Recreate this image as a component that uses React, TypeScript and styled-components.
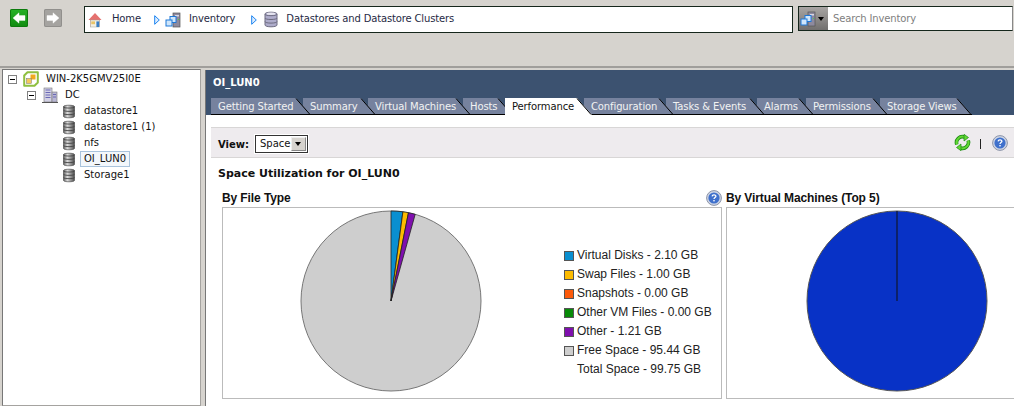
import React from 'react';
import styled, { createGlobalStyle } from 'styled-components';

const UI = `Tahoma, "DejaVu Sans", sans-serif`;

const Global = createGlobalStyle`
  html, body { margin: 0; padding: 0; width: 1014px; height: 406px; overflow: hidden; background: #d6d3ce; }
  * { box-sizing: border-box; }
`;

const Page = styled.div`
  width: 1014px; height: 406px; display: flex; flex-direction: column; overflow: hidden;
  font-family: ${UI}; font-size: 10px; color: #111;
`;
const TopBar = styled.div`
  height: 68px; flex: none; display: flex; align-items: flex-start; padding: 6px 1px 0 10px;
  border-bottom: 2px solid #a09e9b;
`;
const NavButton = styled.div<{ $on?: boolean }>`
  width: 18px; height: 18px; margin: 3px 16px 0 0; border-radius: 2px; display: flex; align-items: center; justify-content: center;
  background: ${p => (p.$on ? 'linear-gradient(#27b327,#108a10)' : '#a5a3a0')};
  box-shadow: inset 0 0 0 1px ${p => (p.$on ? '#0d7a0d' : '#918f8c')};
`;
const Breadcrumb = styled.div`
  width: 709px; height: 27px; margin-left: 6px; flex: none; background: #fff; border: 1px solid #16271c;
  display: flex; align-items: center; padding-left: 3px; color: #1f2a44; letter-spacing: -0.15px;
`;
const Crumb = styled.span<{ $left: number; $right: number }>`
  margin-left: ${p => p.$left}px; margin-right: ${p => p.$right}px; padding-bottom: 2px; white-space: nowrap;
`;
const CrumbChevron = styled.span<{ $right: number }>`
  display: flex; flex: none; margin-right: ${p => p.$right}px;
`;
const Search = styled.div`
  margin-left: 5px; flex: 1; height: 25px; display: flex; background: #fff; border: 1px solid #16271c; border-right-color: #888;
`;
const SearchPicker = styled.div`
  width: 29px; flex: none; display: flex; align-items: center; padding-left: 1px; gap: 2px;
  background: linear-gradient(#a8a5a3, #716f6e);
`;
const SearchText = styled.div`
  padding-left: 5px; line-height: 23px; color: #808080; letter-spacing: -0.15px;
`;
const Body = styled.div`
  flex: 1; display: flex; padding-top: 1px; min-height: 0;
`;
const TreePanel = styled.div`
  width: 199px; margin-left: 2px; flex: none; padding-top: 1px; background: #fff; border: 1px solid #a5a3a0; border-left-color: #777; border-top-color: #777;
`;
const TreeRow = styled.div<{ $indent: number }>`
  height: 16px; display: flex; align-items: center; padding-left: ${p => p.$indent}px; white-space: nowrap;
`;
const Expander = styled.span`
  width: 9px; height: 9px; flex: none; border: 1px solid #808080; position: relative; background: #fff; margin-right: 6px;
  &::after { content: ''; position: absolute; left: 1px; right: 1px; top: 3px; height: 1px; background: #000; }
`;
const TreeLabel = styled.span<{ $sel?: boolean }>`
  margin-left: ${p => (p.$sel ? 3 : 7)}px; padding: 0 ${p => (p.$sel ? 3 : 0)}px; height: 16px; line-height: 14px;
  border: 1px solid ${p => (p.$sel ? '#a9c3dc' : 'transparent')};
  background: ${p => (p.$sel ? '#f3f7fb' : 'transparent')};
  ${p => (p.$sel ? '' : 'border-left: 0; border-right: 0;')}
`;
const Main = styled.div`
  flex: 1; margin: 1px 0 0 4px; min-width: 0; display: flex; flex-direction: column; background: #fff; border-left: 1px solid #777;
`;
const Header = styled.div`
  height: 45px; flex: none; background: #3c5270; display: flex; flex-direction: column; justify-content: space-between;
`;
const HeaderTitle = styled.div`
  padding: 7px 0 0 7px; color: #fff; font-weight: 700; font-size: 10px;
`;
const Tabs = styled.div`
  display: flex; height: 17px; padding-left: 5px; letter-spacing: -0.12px;
`;
const Tab = styled.div<{ $w: number; $active?: boolean; $z: number }>`
  position: relative; flex: none; width: ${p => p.$w}px; margin-right: -8px; height: 17px; line-height: 16px; padding: 1px 0 0 7px;
  color: ${p => (p.$active ? '#111' : '#f2f2f2')}; white-space: nowrap; z-index: ${p => (p.$active ? 30 : p.$z)};
`;
const TabLabel = styled.span`
  position: relative;
`;
const TabShapeSvg = styled.svg`
  position: absolute; left: 0; top: 0;
`;
const Content = styled.div`
  flex: 1; min-height: 0; display: flex; flex-direction: column; padding: 12px 0 0 5px;
`;
const Toolbar = styled.div`
  height: 31px; flex: none; background: #eeebee; border-top: 1px solid #d8d6d6; border-bottom: 1px solid #d8d6d6;
  display: flex; align-items: center; padding: 0 6px 0 7px;
`;
const ViewLabel = styled.span`
  font-weight: 700; margin: 3px 6px 0 0;
`;
const Select = styled.div`
  width: 53px; height: 18px; margin-top: 2px; border: 1px solid #333; background: #fff; box-shadow: 0 0 0 1px #fff; display: flex; align-items: center; justify-content: space-between; padding-left: 4px;
`;
const SelectArrow = styled.span`
  width: 15px; height: 14px; margin-right: 1px; background: #d6d3ce; border: 1px solid #888; border-top-color: #eee; border-left-color: #eee; position: relative;
  &::after { content: ''; position: absolute; left: 3px; top: 4px; border: 3px solid transparent; border-top: 4px solid #000; border-bottom: 0; }
`;
const Spacer = styled.div`flex: 1;`;
const Pipe = styled.span`
  width: 1px; height: 10px; background: #222; margin: 3px 11px 0 9px;
`;
const Heading = styled.div`
  padding: 9px 0 0 7px; font-weight: 700; font-size: 11px; height: 31px;
`;
const Columns = styled.div`
  display: flex; flex: 1; padding-left: 11px; min-height: 0; gap: 4px;
`;
const Column = styled.div<{ $w: number }>`
  width: ${p => p.$w}px; flex: none; display: flex; flex-direction: column;
`;
const ColumnHead = styled.div`
  height: 18px; flex: none; display: flex; align-items: center; justify-content: space-between;
  font: 700 12px "Liberation Sans", Arial, sans-serif; letter-spacing: -0.1px; color: #111;
`;
const ChartBox = styled.div<{ $open?: boolean }>`
  height: 192px; flex: none; border: 1px solid #bbb; ${p => (p.$open ? 'border-right: 0;' : '')}
  display: flex; align-items: flex-start; padding-top: 2px;
`;
const Legend = styled.div`
  display: flex; flex-direction: column; margin: 36px 0 0 82px;
  font: 12px/19px "Liberation Sans", Arial, sans-serif; color: #222;
`;
const LegendRow = styled.div`
  display: flex; align-items: center; height: 19px; white-space: nowrap;
`;
const Swatch = styled.span<{ $c?: string }>`
  width: 10px; height: 10px; flex: none; margin-right: 3px;
  ${p => (p.$c ? `background: ${p.$c}; border: 1px solid #555;` : '')}
`;

const Db = () => (
  <svg width="15" height="15" viewBox="0 0 15 15" style={{ flex: 'none' }}>
    <defs>
      <linearGradient id="dbg" x1="0" x2="1" y1="0" y2="0">
        <stop offset="0" stopColor="#5d5d5d" /><stop offset=".35" stopColor="#dcdcdc" /><stop offset="1" stopColor="#4a4a4a" />
      </linearGradient>
    </defs>
    <path d="M1.5 2.5C1.5 .8 12.5 .8 12.5 2.5V12.5C12.5 14.2 1.5 14.2 1.5 12.5Z" fill="url(#dbg)" stroke="#555" strokeWidth=".7" />
    <path d="M1.5 3C1.5 4.4 12.5 4.4 12.5 3M1.5 6.3C1.5 7.7 12.5 7.7 12.5 6.3M1.5 9.6C1.5 11 12.5 11 12.5 9.6" fill="none" stroke="#444" strokeWidth=".9" />
  </svg>
);
const HelpIcon = () => (
  <svg width="16" height="16" viewBox="0 0 16 16" style={{ flex: 'none' }}>
    <circle cx="8" cy="8" r="7.4" fill="#cfd6e6" stroke="#8c94a8" />
    <circle cx="8" cy="8" r="5.6" fill="#3f70cc" />
    <path d="M6.1 6.4C6.2 4.4 9.9 4.4 9.9 6.3C9.9 7.6 8 7.6 8 9" fill="none" stroke="#fff" strokeWidth="1.3" />
    <rect x="7.3" y="10" width="1.4" height="1.4" fill="#fff" />
  </svg>
);
const ServerIcon = () => (
  <svg width="16" height="16" viewBox="0 0 16 16" style={{ flex: 'none' }}>
    <rect x="8" y="1" width="7" height="14" fill="#8e8a9e" stroke="#555" strokeWidth=".7" />
    <rect x="10" y="3" width="4" height="1.5" fill="#d8d6e2" />
    <rect x="13" y="7" width="1" height="1" fill="#4cd34c" />
    <rect x="5" y="4.5" width="6" height="6" fill="#cfe6fb" stroke="#1e78d8" />
    <rect x="1" y="8" width="6" height="6" fill="#cfe6fb" stroke="#1e78d8" />
  </svg>
);
const BigDb = () => (
  <svg width="14" height="17" viewBox="0 0 14 17" style={{ flex: 'none' }}>
    <path d="M1 3C1 .6 13 .6 13 3V14C13 16.4 1 16.4 1 14Z" fill="#aeaccb" stroke="#6d6b80" />
    <path d="M1 3.2C1 5.2 13 5.2 13 3.2M1 7C1 9 13 9 13 7M1 10.6C1 12.6 13 12.6 13 10.6" fill="none" stroke="#6d6b80" />
    <ellipse cx="7" cy="2.7" rx="4.5" ry="1.2" fill="#e6e5f0" />
  </svg>
);
const Chevron = () => (
  <svg width="6" height="10" viewBox="0 0 6 10" style={{ flex: 'none' }}>
    <path d="M.7.7L5.3 5L.7 9.3Z" fill="#dcecff" stroke="#1c84f0" />
  </svg>
);
const Home = () => (
  <svg width="14" height="16" viewBox="0 0 15 16" style={{ flex: 'none' }}>
    <path d="M7.5.5L14.5 8H12.5V15H2.5V8H.5Z" fill="#e5716f" />
    <rect x="2.5" y="8" width="10" height="7.5" fill="#f3f0e4" stroke="#9c9a90" strokeWidth=".5" />
    <rect x="3.5" y="9.5" width="4" height="3" fill="#e9c467" />
    <rect x="9" y="9.5" width="3" height="6" fill="#3a7fc4" />
  </svg>
);
const Cluster = () => (
  <svg width="16" height="16" viewBox="0 0 16 16" style={{ flex: 'none' }}>
    <path d="M4.5 1.2H14.8V11.5L11.5 14.8H1.2V4.5Z" fill="#fff" stroke="#8fbf3f" strokeWidth="2" strokeLinejoin="round" />
    <rect x="7.5" y="3.5" width="5" height="5" fill="#f0a91f" />
    <rect x="3.5" y="7.5" width="5" height="5" fill="#f4c95a" stroke="#777" strokeWidth=".5" />
  </svg>
);
const Building = () => (
  <svg width="16" height="16" viewBox="0 0 16 16" style={{ flex: 'none' }}>
    <rect x="2" y="1" width="8" height="14" fill="#d2d0e4" stroke="#777" strokeWidth=".6" />
    <rect x="10" y="5" width="5" height="10" fill="#b9b7d4" stroke="#777" strokeWidth=".6" />
    <path d="M3.5 3H8.5M3.5 5.5H8.5M3.5 8H8.5M3.5 10.5H8.5M11 7.5H14M11 10H14" stroke="#6a69b5" strokeWidth="1.2" />
    <path d="M0 15.5H16" stroke="#555" />
  </svg>
);
const Refresh = () => (
  <svg width="17" height="17" viewBox="0 0 17 17" style={{ flex: 'none' }}>
    <g fill="none" strokeLinecap="butt">
      <path d="M2.8 10.5A6 6 0 0 1 10.5 3" stroke="#1b8a12" strokeWidth="3.6" />
      <path d="M14.2 6.5A6 6 0 0 1 6.5 14" stroke="#1b8a12" strokeWidth="3.6" />
      <path d="M2.8 10.5A6 6 0 0 1 10.5 3" stroke="#62d834" strokeWidth="2" />
      <path d="M14.2 6.5A6 6 0 0 1 6.5 14" stroke="#62d834" strokeWidth="2" />
    </g>
    <path d="M10 .3L14.5 3.5L10 7Z" fill="#62d834" stroke="#1b8a12" strokeWidth=".7" />
    <path d="M7 16.7L2.5 13.5L7 10Z" fill="#62d834" stroke="#1b8a12" strokeWidth=".7" />
  </svg>
);
const Arrow = ({ dir }: { dir: 1 | -1 }) => (
  <svg width="14" height="12" viewBox="0 0 14 12" style={{ transform: dir < 0 ? undefined : 'scaleX(-1)' }}>
    <path d="M1 6L7 .8V3.6H13V8.4H7V11.2Z" fill="#fff" stroke="#fff" strokeWidth=".4" />
  </svg>
);

const TabShape = ({ w, active }: { w: number; active?: boolean }) => (
  <TabShapeSvg width={w} height="17" viewBox={`0 0 ${w} 17`}>
    <path d={`M0 0H${w - 15}L${w} 17H0Z`} fill={active ? '#fff' : '#76829e'} />
    {active ? null : <path d={`M0 16.5H${w}`} stroke="#000" />}
    <path d={`M${w - 15} .5L${w - 1} 16.5`} stroke="#000" fill="none" />
  </TabShapeSvg>
);

const tabs = [
  { t: 'Getting Started', w: 100 },
  { t: 'Summary', w: 73 },
  { t: 'Virtual Machines', w: 103 },
  { t: 'Hosts', w: 50 },
  { t: 'Performance', w: 87, active: true },
  { t: 'Configuration', w: 90 },
  { t: 'Tasks & Events', w: 99 },
  { t: 'Alarms', w: 57 },
  { t: 'Permissions', w: 82 },
  { t: 'Storage Views', w: 92 },
];

const polar = (cx: number, cy: number, r: number, deg: number) => {
  const a = ((deg - 90) * Math.PI) / 180;
  return [cx + r * Math.cos(a), cy + r * Math.sin(a)];
};
const slice = (from: number, to: number) => {
  const [x1, y1] = polar(91, 91, 90, from);
  const [x2, y2] = polar(91, 91, 90, to);
  return `M91 91L${x1} ${y1}A90 90 0 ${to - from > 180 ? 1 : 0} 1 ${x2} ${y2}Z`;
};

const FilePie = () => (
  <svg width="182" height="182" viewBox="0 0 182 182" style={{ flex: 'none', marginLeft: 77 }}>
    <circle cx="91" cy="91" r="90" fill="#cecece" stroke="#777" />
    <path d={slice(0, 7.6)} fill="#0a8fd0" stroke="#222" strokeWidth=".8" />
    <path d={slice(7.6, 11.2)} fill="#fdbb00" stroke="#222" strokeWidth=".8" />
    <path d={slice(11.2, 15.6)} fill="#7f0fae" stroke="#222" strokeWidth=".8" />
  </svg>
);
const VmPie = () => (
  <svg width="182" height="182" viewBox="0 0 182 182" style={{ flex: 'none', marginLeft: 79 }}>
    <circle cx="91" cy="91" r="90" fill="#0832c6" stroke="#555" />
    <path d="M91 1V91" stroke="#111" />
  </svg>
);

const legend = [
  ['#0a8fd0', 'Virtual Disks - 2.10 GB'],
  ['#fdbb00', 'Swap Files - 1.00 GB'],
  ['#fd5a0a', 'Snapshots - 0.00 GB'],
  ['#088a08', 'Other VM Files - 0.00 GB'],
  ['#7f0fae', 'Other - 1.21 GB'],
  ['#cecece', 'Free Space - 95.44 GB'],
  ['', 'Total Space - 99.75 GB'],
];

export default function App() {
  return (
    <Page>
      <Global />
      <TopBar>
        <NavButton $on><Arrow dir={-1} /></NavButton>
        <NavButton><Arrow dir={1} /></NavButton>
        <Breadcrumb>
          <Home /><Crumb $left={10} $right={13}>Home</Crumb>
          <CrumbChevron $right={5}><Chevron /></CrumbChevron><ServerIcon />
          <Crumb $left={8} $right={16}>Inventory</Crumb>
          <CrumbChevron $right={7}><Chevron /></CrumbChevron><BigDb />
          <Crumb $left={8} $right={0}>Datastores and Datastore Clusters</Crumb>
        </Breadcrumb>
        <Search>
          <SearchPicker>
            <ServerIcon />
            <svg width="6" height="4" viewBox="0 0 6 4"><path d="M0 0H6L3 4Z" fill="#000" /></svg>
          </SearchPicker>
          <SearchText>Search Inventory</SearchText>
        </Search>
      </TopBar>
      <Body>
        <TreePanel>
          <TreeRow $indent={5}><Expander /><Cluster /><TreeLabel>WIN-2K5GMV25I0E</TreeLabel></TreeRow>
          <TreeRow $indent={24}><Expander /><Building /><TreeLabel>DC</TreeLabel></TreeRow>
          {['datastore1', 'datastore1 (1)', 'nfs', 'OI_LUN0', 'Storage1'].map(n => (
            <TreeRow $indent={59} key={n}><Db /><TreeLabel $sel={n === 'OI_LUN0'}>{n}</TreeLabel></TreeRow>
          ))}
        </TreePanel>
        <Main>
          <Header>
            <HeaderTitle>OI_LUN0</HeaderTitle>
            <Tabs>
              {tabs.map((t, i) => (
                <Tab key={t.t} $w={t.w} $active={t.active} $z={20 - i}>
                  <TabShape w={t.w} active={t.active} />
                  <TabLabel>{t.t}</TabLabel>
                </Tab>
              ))}
            </Tabs>
          </Header>
          <Content>
            <Toolbar>
              <ViewLabel>View:</ViewLabel>
              <Select>Space<SelectArrow /></Select>
              <Spacer />
              <Refresh /><Pipe /><HelpIcon />
            </Toolbar>
            <Heading>Space Utilization for OI_LUN0</Heading>
            <Columns>
              <Column $w={500}>
                <ColumnHead>By File Type<HelpIcon /></ColumnHead>
                <ChartBox>
                  <FilePie />
                  <Legend>
                    {legend.map(([c, l]) => (
                      <LegendRow key={l}><Swatch $c={c} />{l}</LegendRow>
                    ))}
                  </Legend>
                </ChartBox>
              </Column>
              <Column $w={300}>
                <ColumnHead>By Virtual Machines (Top 5)</ColumnHead>
                <ChartBox $open><VmPie /></ChartBox>
              </Column>
            </Columns>
          </Content>
        </Main>
      </Body>
    </Page>
  );
}
